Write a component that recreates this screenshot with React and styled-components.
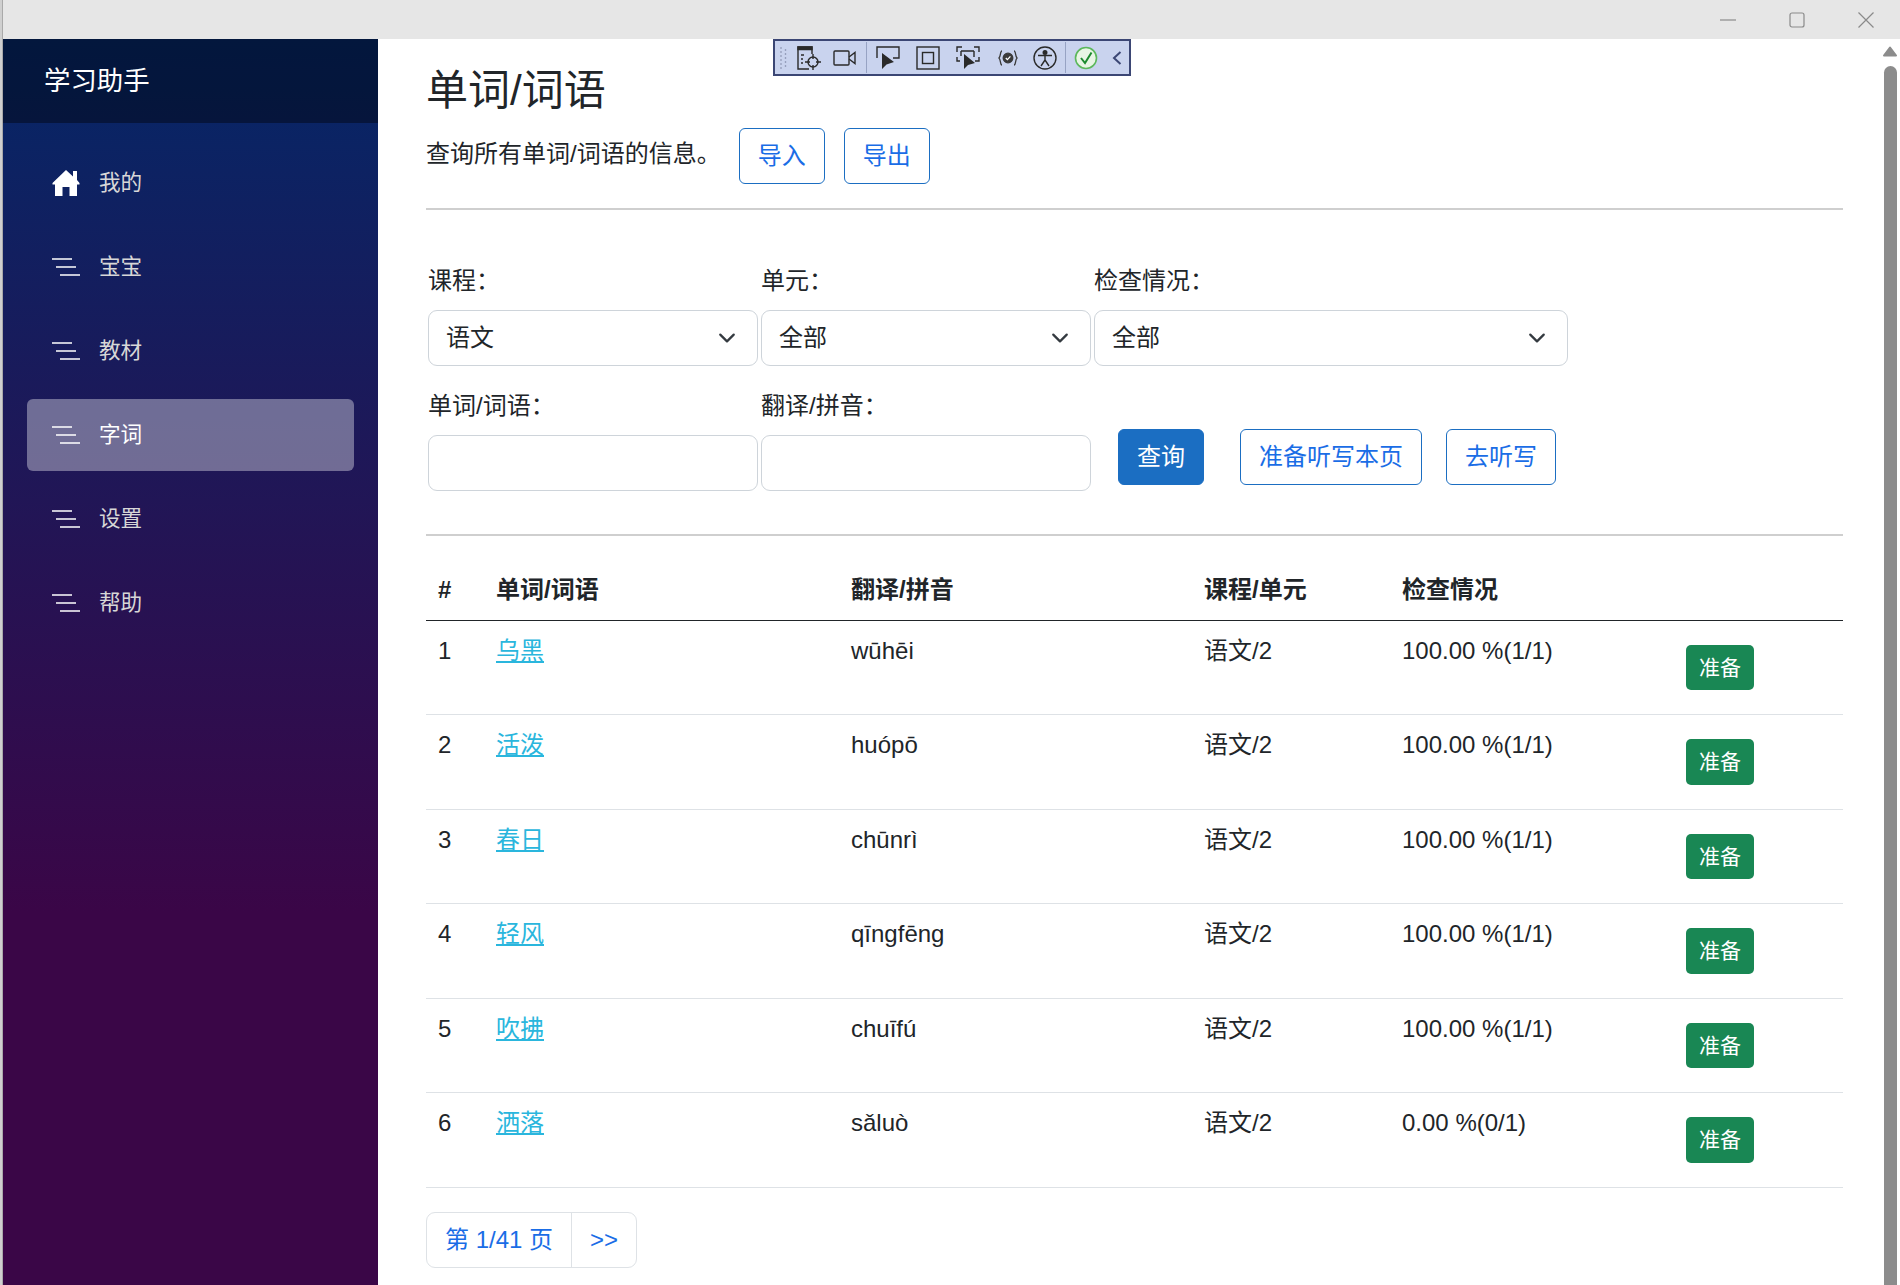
import React from "react";
import styled, { createGlobalStyle } from "styled-components";

const Global = createGlobalStyle`
  html, body { margin: 0; padding: 0; background: #fff; }
  body { font-family: "Liberation Sans", "Noto Sans CJK SC", sans-serif; color: #212529; font-size: 24px; line-height: 36px; }
  * { box-sizing: border-box; }
`;

const Screen = styled.div`display: flex; width: 1900px; height: 1285px; overflow: hidden; position: relative;`;
const DesktopEdge = styled.div`width: 3px; flex: none; background: #cfcfcf; border-right: 1px solid #a9a9a9;`;
const Win = styled.div`flex: 1; display: flex; flex-direction: column; min-width: 0;`;
const TitleBar = styled.div`height: 39px; flex: none; background: #e6e6e6; display: flex; justify-content: flex-end; align-items: center; padding-right: 26px; gap: 53px; color: #8a8a8a;`;
const WinBody = styled.div`flex: 1; display: flex; min-height: 0;`;

const Sidebar = styled.aside`width: 375px; flex: none; background: linear-gradient(180deg, rgb(5, 39, 103) 0%, #3a0647 70%); display: flex; flex-direction: column;`;
const Brand = styled.div`height: 84px; background: rgba(0, 0, 0, 0.4); display: flex; align-items: center; padding-left: 41px; font-size: 26.4px; color: #fff;`;
const Nav = styled.nav`display: flex; flex-direction: column; gap: 12px; padding: 24px 24px 0;`;
const NavItem = styled.a`height: 72px; border-radius: 6px; display: flex; align-items: center; padding-left: 25px; gap: 19px; font-size: 21.6px;
  color: ${p => (p.$active ? "#fff" : "#d7d7d7")}; background: ${p => (p.$active ? "rgba(255,255,255,0.37)" : "transparent")};`;
const NavGlyph = styled.svg`width: 28px; height: 28px; flex: none; color: #fff;`;

const Main = styled.main`flex: 1; min-width: 0; padding: 27px 37px 0 48px;`;
const Heading = styled.h1`margin: 0; font-size: 42px; line-height: 50px; font-weight: 400;`;
const Sub = styled.div`display: flex; align-items: flex-start; margin-top: 12px; gap: 19px;`;
const SubText = styled.p`margin: 8px -1px 0 0;`;
const Rule = styled.hr`margin: ${p => p.$m}; border: 0; height: ${p => p.$h || 2}px; background: #cfcfcf;`;
const Btn = styled.button`height: 56px; padding: 0 18px; font: inherit; font-size: 24px; line-height: 36px; border-radius: 6px; white-space: nowrap;
  border: 1.5px solid #1b6ec2; color: ${p => (p.$solid ? "#fff" : "#1a6de6")}; background: ${p => (p.$solid ? "#1b6ec2" : "#fff")};`;

const Form = styled.form`margin: 0 0 0 2px; display: grid; grid-template-columns: 330px 330px 474px; column-gap: 3px; row-gap: 22px;`;
const Field = styled.label`display: flex; flex-direction: column; gap: 11px;`;
const fieldBox = `height: 56px; width: 100%; border: 1.5px solid #ced4da; border-radius: 9px; font: inherit; color: #212529; background-color: #fff;`;
const Select = styled.select`${fieldBox} appearance: none; padding: 0 54px 0 17px;
  background-image: url("data:image/svg+xml,%3csvg xmlns='http://www.w3.org/2000/svg' viewBox='0 0 16 16'%3e%3cpath fill='none' stroke='%23343a40' stroke-linecap='round' stroke-linejoin='round' stroke-width='2' d='m2 5 6 6 6-6'/%3e%3c/svg%3e");
  background-repeat: no-repeat; background-position: right 18px center; background-size: 24px 18px;`;
const Input = styled.input`${fieldBox} padding: 0 18px;`;
const Actions = styled.div`display: flex; align-items: flex-end; padding: 0 0 6px 24px; gap: 0;`;
const ActionGap = styled.span`width: ${p => p.$w}px; flex: none;`;

const Table = styled.table`width: 1417px; border-collapse: collapse; table-layout: fixed;`;
const Th = styled.th`height: 60px; padding: 12px; text-align: left; font-weight: 700; border-bottom: 1.5px solid #212529;`;
const Td = styled.td`height: 94.5px; padding: ${p => (p.$flush ? "0" : "12px")}; vertical-align: top; border-bottom: 1.5px solid #dee2e6;`;
const WordLink = styled.a`color: #2ab6dd; text-decoration: underline;`;
const SmallBtn = styled.button`margin: 24px 12px 0 24px; height: 45.5px; width: 68px; padding: 0; font: inherit; font-size: 21px; line-height: 31.5px; color: #fff; background: #198754; border: 0; border-radius: 5px;`;

const Pager = styled.div`display: inline-flex; margin-top: 24px; height: 56px; border: 1.5px solid #dee2e6; border-radius: 9px; color: #1a6de6;`;
const PageCell = styled.span`display: flex; align-items: center; padding: 0 18px; white-space: nowrap; & + & { border-left: 1.5px solid #dee2e6; }`;

const Scroll = styled.div`width: 20px; flex: none; padding: 7px 3px 0 3px; display: flex; flex-direction: column; gap: 9px; align-items: stretch;`;
const ScrollUp = styled.svg`width: 14px; height: 11px; flex: none; color: #8c8c8c;`;
const Thumb = styled.div`flex: 1; margin: 0 0 -20px 1px; background: #8c8c8c; border-radius: 7px;`;

const Tool = styled.div`position: absolute; left: 773px; top: 39px; width: 358px; height: 37px; background: #c9d3ee; border: 2px solid #3b4674; display: flex; align-items: center; padding-left: 4px; color: #2a2a2a;`;
const ToolSvg = styled.svg`flex: none; width: ${p => p.$w || 24}px; height: 24px; margin-left: ${p => p.$ml || 0}px;`;
const ToolSep = styled.span`flex: none; width: 1px; height: 31px; margin-left: ${p => p.$ml}px; background: #97a3c4;`;

const Menu = () => (
  <NavGlyph viewBox="0 0 28 28" fill="none" stroke="currentColor" strokeWidth="1.6">
    <path d="M0 6H20M4 14H24M8 22H28" />
  </NavGlyph>
);
const Home = () => (
  <NavGlyph viewBox="0 0 28 28" fill="currentColor">
    <path d="M14 1 L21 7.5 V2 H25 V11 L27.5 14 V15.5 H25 V27 H17.5 V18 H10.5 V27 H3 V15.5 H.5 V14 Z" />
  </NavGlyph>
);

const rows = [
  ["1", "乌黑", "wūhēi", "100.00 %(1/1)"],
  ["2", "活泼", "huópō", "100.00 %(1/1)"],
  ["3", "春日", "chūnrì", "100.00 %(1/1)"],
  ["4", "轻风", "qīngfēng", "100.00 %(1/1)"],
  ["5", "吹拂", "chuīfú", "100.00 %(1/1)"],
  ["6", "洒落", "sǎluò", "0.00 %(0/1)"],
];
const nav = ["宝宝", "教材", "字词", "设置", "帮助"];

const Toolbar = () => (
  <Tool>
    <ToolSvg $w={9} viewBox="0 0 9 24" fill="#7b84a3">
      {[2, 6, 10, 14, 18, 22].map(y => <circle key={y} cx="2" cy={y} r=".8" />)}
      {[4, 8, 12, 16, 20].map(y => <circle key={y} cx="6.5" cy={y} r=".8" />)}
    </ToolSvg>
    <ToolSvg $ml={9} viewBox="0 0 24 24" fill="none" stroke="currentColor" strokeWidth="1.4">
      <path d="M12 23H1V1H15V8" /><path d="M1 1H15V3.5H1Z" fill="currentColor" />
      <path d="M4 9H7M4 13H6M4 17H6" /><circle cx="16" cy="16" r="5" /><path d="M16 8V13M16 19V24M8 16H13M19 16H24" />
    </ToolSvg>
    <ToolSvg $ml={12} viewBox="0 0 24 24" fill="none" stroke="currentColor" strokeWidth="1.4">
      <rect x="1" y="5" width="15" height="14" rx="1" /><path d="M16 11L22 6.5V17.5L16 13" />
    </ToolSvg>
    <ToolSep $ml={9} />
    <ToolSvg $ml={9} viewBox="0 0 24 24" fill="none" stroke="currentColor" strokeWidth="1.4">
      <path d="M1 12V1H23V12H17" />
      <path d="M6 7L6 23L10.5 18.5L18 16Z" fill="currentColor" stroke="none" />
    </ToolSvg>
    <ToolSvg $ml={16} viewBox="0 0 24 24" fill="none" stroke="currentColor" strokeWidth="1.4">
      <rect x="1" y="1" width="22" height="22" /><rect x="6.5" y="6.5" width="11" height="11" />
    </ToolSvg>
    <ToolSvg $ml={16} viewBox="0 0 24 24" fill="none" stroke="currentColor" strokeWidth="1.4">
      <path d="M1 6V1H6M18 1H23V6M23 11V15H19M1 11V15H4" /><path d="M18 5V11M5 5H18M5 5V10" />
      <path d="M8 8L8 23L12 19L19 17Z" fill="currentColor" stroke="none" />
    </ToolSvg>
    <ToolSvg $w={20} $ml={18} viewBox="0 0 20 24" fill="none" stroke="#3a3a3a" strokeWidth="1.3">
      <path d="M4 5C2 5 3 10 1 12C3 14 2 19 4 19M16 5C18 5 17 10 19 12C17 14 18 19 16 19" />
      <circle cx="10" cy="12" r="4.8" fill="#3a3a3a" /><path d="M7.8 12L9.4 13.6L12.4 10.4" stroke="#fff" />
    </ToolSvg>
    <ToolSvg $ml={15} viewBox="0 0 24 24" fill="none" stroke="currentColor" strokeWidth="1.4">
      <circle cx="12" cy="12" r="11" /><circle cx="12" cy="6.5" r="1.8" fill="currentColor" />
      <path d="M5 9.5H19M12 9.5V14M12 14L8 20M12 14L16 20" />
    </ToolSvg>
    <ToolSep $ml={8} />
    <ToolSvg $ml={8} viewBox="0 0 24 24" fill="none">
      <circle cx="12" cy="12" r="10.5" fill="#e8f5e4" stroke="#5cb85c" strokeWidth="1.6" />
      <path d="M7 12L11 17L17.5 6.5" stroke="#1c8a2e" strokeWidth="2" />
    </ToolSvg>
    <ToolSvg $w={10} $ml={14} viewBox="0 0 10 24" fill="none" stroke="#3b4674" strokeWidth="2">
      <path d="M8.5 6L2 12L8.5 18" />
    </ToolSvg>
  </Tool>
);

export default function App() {
  return (
    <Screen>
      <Global />
      <DesktopEdge />
      <Win>
        <TitleBar>
          <svg width="16" height="16" viewBox="0 0 16 16" fill="none" stroke="currentColor" strokeWidth="1.2"><path d="M0 8H16" /></svg>
          <svg width="16" height="16" viewBox="0 0 16 16" fill="none" stroke="currentColor" strokeWidth="1.2"><rect x="1" y="1" width="14" height="14" rx="2" /></svg>
          <svg width="16" height="16" viewBox="0 0 16 16" fill="none" stroke="currentColor" strokeWidth="1.2"><path d="M.5 .5L15.5 15.5M15.5 .5L.5 15.5" /></svg>
        </TitleBar>
        <WinBody>
          <Sidebar>
            <Brand>学习助手</Brand>
            <Nav>
              <NavItem><Home />我的</NavItem>
              {nav.map(n => <NavItem key={n} $active={n === "字词"}><Menu />{n}</NavItem>)}
            </Nav>
          </Sidebar>
          <Main>
            <Heading>单词/词语</Heading>
            <Sub>
              <SubText>查询所有单词/词语的信息。</SubText>
              <Btn>导入</Btn>
              <Btn>导出</Btn>
            </Sub>
            <Rule $m="24px 0 53px" $h={1.5} />
            <Form>
              <Field>课程：<Select defaultValue="语文"><option>语文</option></Select></Field>
              <Field>单元：<Select><option>全部</option></Select></Field>
              <Field>检查情况：<Select><option>全部</option></Select></Field>
              <Field>单词/词语：<Input /></Field>
              <Field>翻译/拼音：<Input /></Field>
              <Actions>
                <Btn $solid type="button">查询</Btn>
                <ActionGap $w={36} />
                <Btn type="button">准备听写本页</Btn>
                <ActionGap $w={24} />
                <Btn type="button">去听写</Btn>
              </Actions>
            </Form>
            <Rule $m="43px 0 24px" />
            <Table>
              <colgroup>
                <col style={{ width: 58 }} /><col style={{ width: 355 }} /><col style={{ width: 353 }} />
                <col style={{ width: 198 }} /><col style={{ width: 272 }} /><col style={{ width: 181 }} />
              </colgroup>
              <thead>
                <tr><Th>#</Th><Th>单词/词语</Th><Th>翻译/拼音</Th><Th>课程/单元</Th><Th>检查情况</Th><Th /></tr>
              </thead>
              <tbody>
                {rows.map(r => (
                  <tr key={r[0]}>
                    <Td>{r[0]}</Td>
                    <Td><WordLink>{r[1]}</WordLink></Td>
                    <Td>{r[2]}</Td>
                    <Td>语文/2</Td>
                    <Td>{r[3]}</Td>
                    <Td $flush><SmallBtn>准备</SmallBtn></Td>
                  </tr>
                ))}
              </tbody>
            </Table>
            <Pager><PageCell>第 1/41 页</PageCell><PageCell>&gt;&gt;</PageCell></Pager>
          </Main>
          <Scroll>
            <ScrollUp viewBox="0 0 14 11" fill="currentColor" stroke="currentColor" strokeWidth="2" strokeLinejoin="round"><path d="M7 1.5L13 9.5H1Z" /></ScrollUp>
            <Thumb />
          </Scroll>
        </WinBody>
      </Win>
      <Toolbar />
    </Screen>
  );
}
